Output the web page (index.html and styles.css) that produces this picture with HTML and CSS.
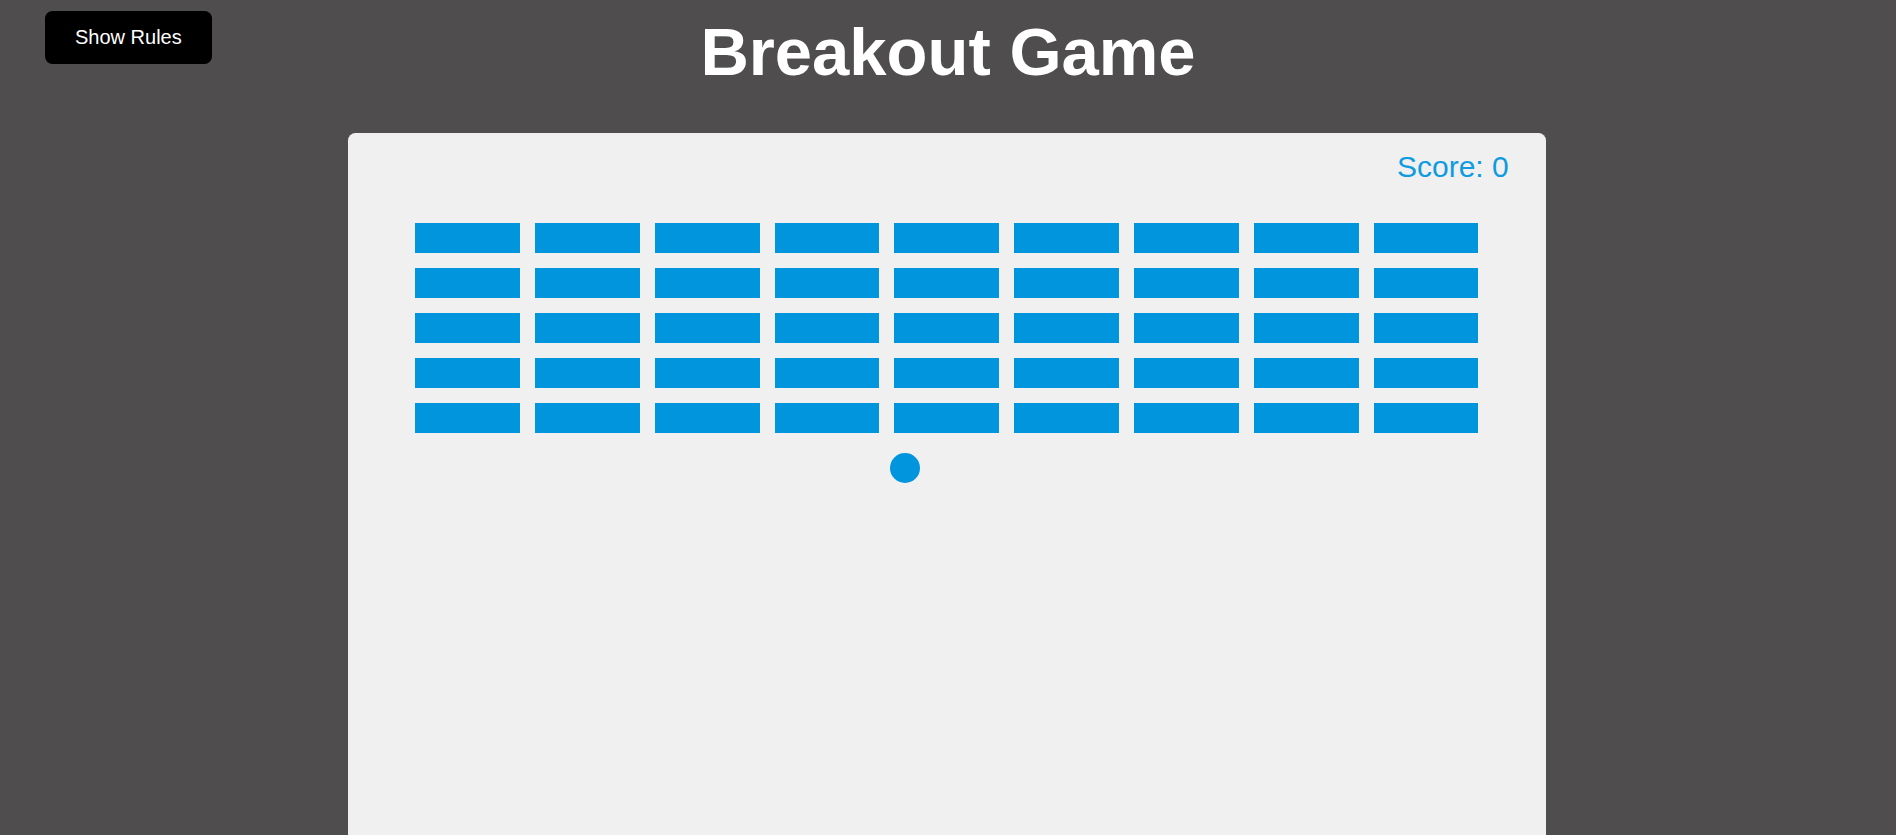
FILE: index.html
```html
<!DOCTYPE html>
<html lang="en">
<head>
<meta charset="utf-8">
<title>Breakout Game</title>
<link rel="stylesheet" href="styles.css">
</head>
<body>
<button class="btn rules-btn">Show Rules</button>
<h1 class="title">Breakout Game</h1>
<div class="board">
  <div class="score">Score: 0</div>
  <div class="bricks">
    <div class="brick"></div><div class="brick"></div><div class="brick"></div><div class="brick"></div><div class="brick"></div><div class="brick"></div><div class="brick"></div><div class="brick"></div><div class="brick"></div>
    <div class="brick"></div><div class="brick"></div><div class="brick"></div><div class="brick"></div><div class="brick"></div><div class="brick"></div><div class="brick"></div><div class="brick"></div><div class="brick"></div>
    <div class="brick"></div><div class="brick"></div><div class="brick"></div><div class="brick"></div><div class="brick"></div><div class="brick"></div><div class="brick"></div><div class="brick"></div><div class="brick"></div>
    <div class="brick"></div><div class="brick"></div><div class="brick"></div><div class="brick"></div><div class="brick"></div><div class="brick"></div><div class="brick"></div><div class="brick"></div><div class="brick"></div>
    <div class="brick"></div><div class="brick"></div><div class="brick"></div><div class="brick"></div><div class="brick"></div><div class="brick"></div><div class="brick"></div><div class="brick"></div><div class="brick"></div>
  </div>
  <div class="ball"></div>
</div>
</body>
</html>
```
FILE: styles.css
```css
* { box-sizing: border-box; }
html { overflow: hidden; }
body {
  margin: 0;
  min-height: 100vh;
  background: #4f4d4e;
  font-family: "Liberation Sans", Arial, sans-serif;
  display: flex;
  flex-direction: column;
  align-items: center;
}
.btn {
  cursor: pointer;
  border: 0;
  padding: 15px 30px;
  background: #000;
  color: #fff;
  border-radius: 7.5px;
  font-family: "Liberation Sans", Arial, sans-serif;
  font-size: 20px;
  line-height: 23px;
}
.rules-btn {
  position: absolute;
  top: 11px;
  left: 45px;
}
.title {
  margin: 12.5px 0 42.5px;
  font-size: 67px;
  line-height: 78px;
  font-weight: bold;
  color: #fff;
}
.board {
  position: relative;
  flex: none;
  width: 1198px;
  height: 900px;
  margin-right: 2px;
  background: #f0f0f0;
  border-radius: 7.5px;
  padding: 90px 0 0 67.3px;
}
.bricks {
  display: grid;
  grid-template-columns: repeat(9, 104.8px);
  grid-auto-rows: 30px;
  column-gap: 15px;
  row-gap: 15px;
}
.brick { background: #0095dd; }
.score {
  position: absolute;
  left: 1049px;
  top: 17px;
  font-size: 30px;
  line-height: 34px;
  color: #0f9be0;
}
.ball {
  position: absolute;
  left: 542px;
  top: 320px;
  width: 30px;
  height: 30px;
  border-radius: 50%;
  background: #0095dd;
}
```
